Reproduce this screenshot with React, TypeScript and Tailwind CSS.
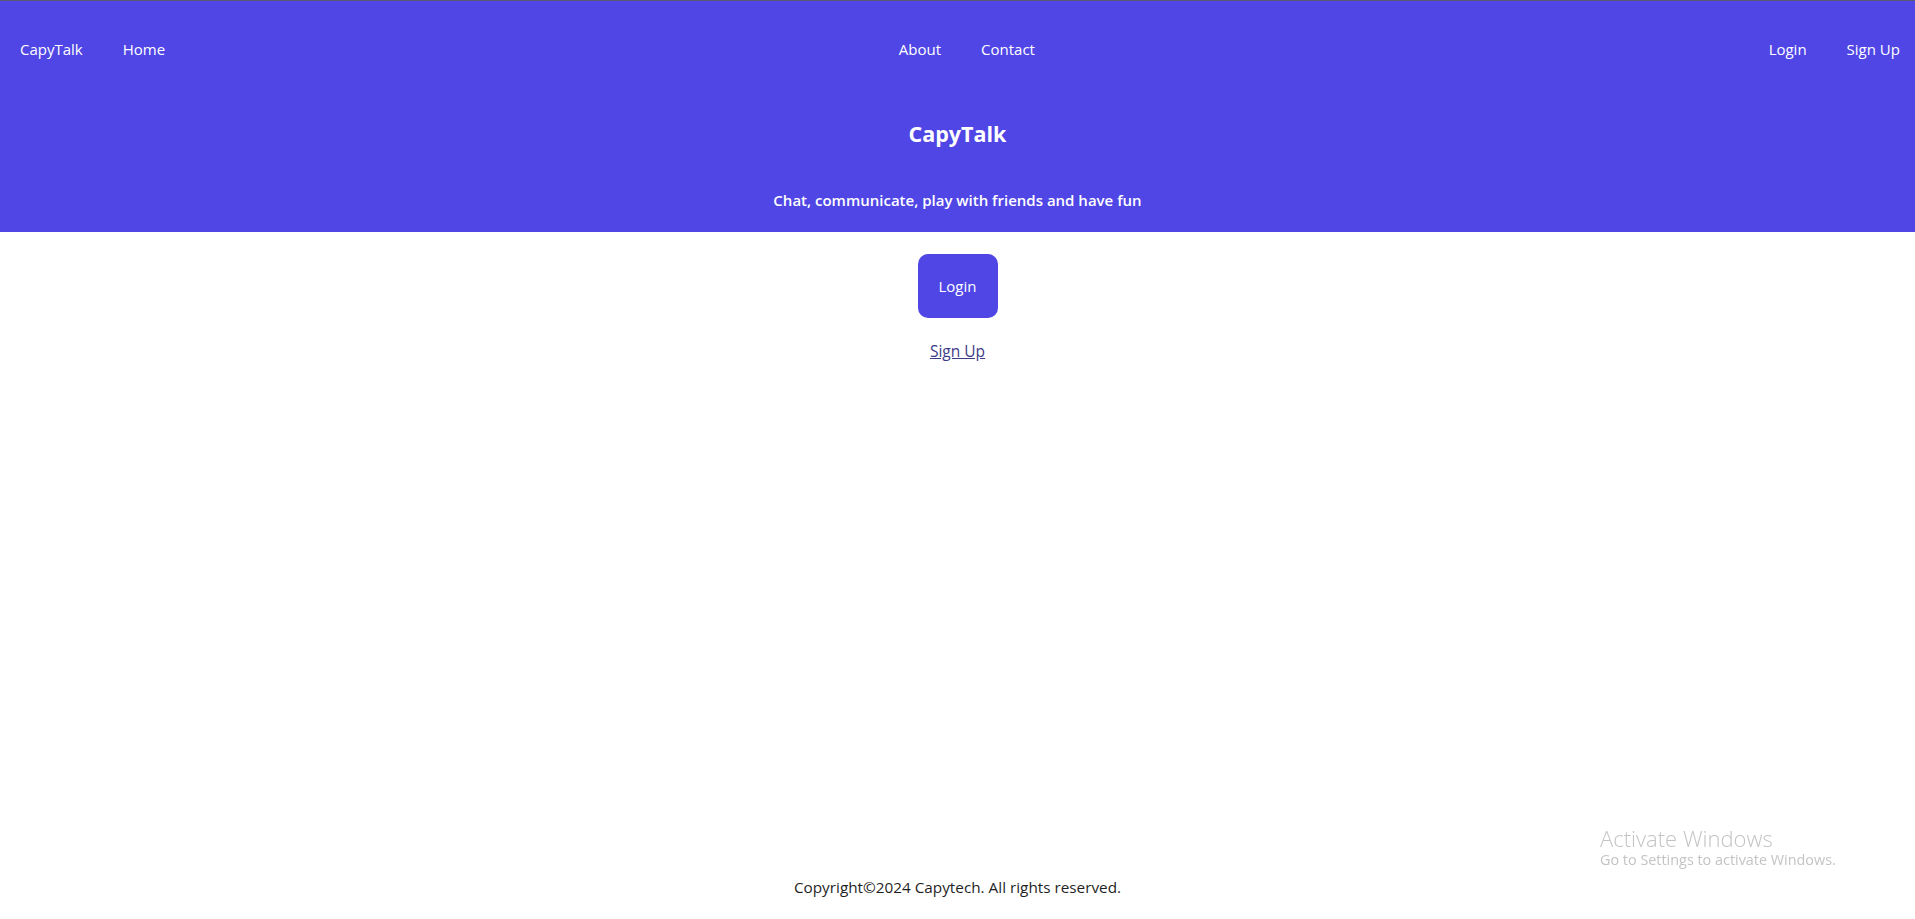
import React from "react";

export default function App() {
  return (
    <div className="min-h-screen flex flex-col bg-white font-['Open_Sans',sans-serif] text-[#1f1f1f]">
      <header className="bg-[#4f46e5] text-white border-t border-[#5a5a72]">
        <nav className="h-[96px] flex items-center justify-between pl-5 pr-[15px] text-[15px]">
          <div className="flex items-center gap-10">
            <a href="#">CapyTalk</a>
            <a href="#">Home</a>
          </div>
          <div className="flex items-center gap-10">
            <a href="#">About</a>
            <a href="#">Contact</a>
          </div>
          <div className="flex items-center gap-10">
            <a href="#">Login</a>
            <a href="#">Sign Up</a>
          </div>
        </nav>
        <div className="flex flex-col items-center pt-[21px] pb-5">
          <h1 className="text-[21.5px] leading-8 font-bold">CapyTalk</h1>
          <p className="mt-[38px] text-[15px] leading-6 font-semibold">
            Chat, communicate, play with friends and have fun
          </p>
        </div>
      </header>

      <main className="flex flex-col items-center pt-[22px]">
        <button className="w-20 h-16 rounded-[10px] bg-[#4f46e5] text-white text-[15px]">
          Login
        </button>
        <a href="#" className="mt-[21px] leading-6 text-[15.5px] underline text-[#3e3c86]">
          Sign Up
        </a>
      </main>

      <footer className="mt-auto pb-5 text-center text-[15.3px] leading-6">
        Copyright©2024 Capytech. All rights reserved.
      </footer>

      <div className="fixed left-[1600px] bottom-[50px] text-[#c4c4c4] pointer-events-none">
        <div className="text-[22px] leading-[26px] font-light">Activate Windows</div>
        <div className="text-[14.4px] leading-[18px]">Go to Settings to activate Windows.</div>
      </div>
    </div>
  );
}
